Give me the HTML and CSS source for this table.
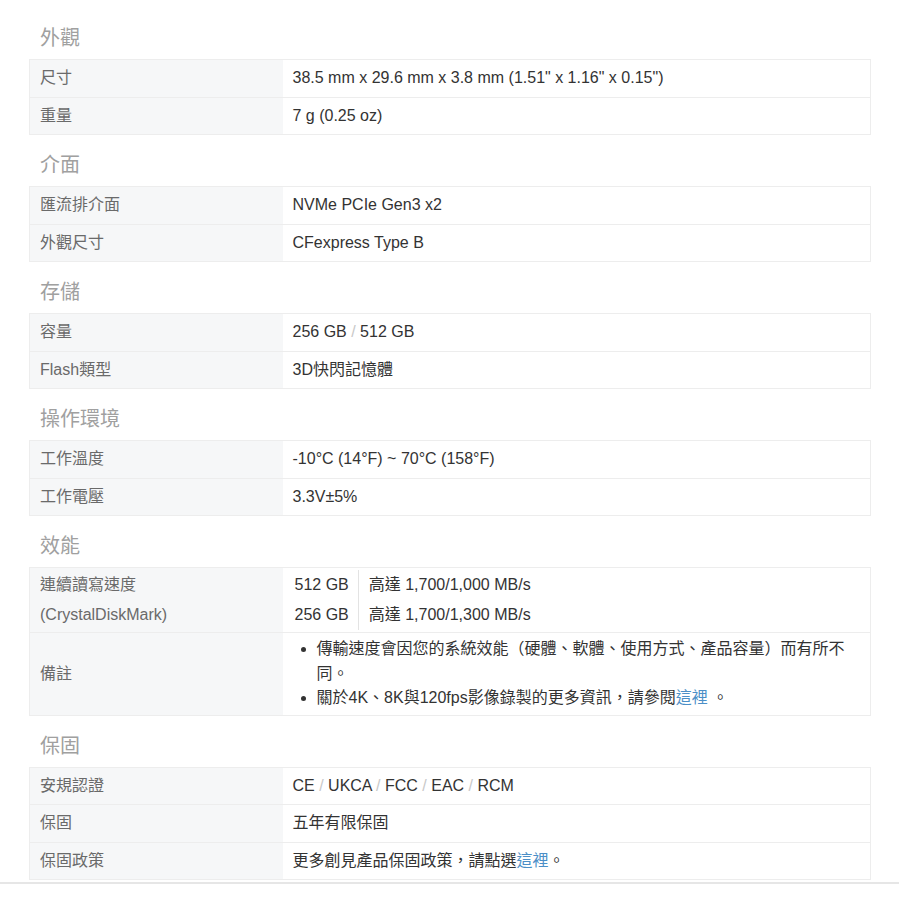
FILE: index.html
```html
<!DOCTYPE html>
<html lang="zh-Hant">
<head>
    <meta charset="UTF-8">
    <meta name="viewport" content="width=device-width, initial-scale=1.0">
    <title>規格</title>
    <link rel="stylesheet" href="styles.css">
</head>
<body>
    <div class="specs">
        <h3 class="group-title">外觀</h3>
        <table class="spec-table">
            <tr><th>尺寸</th><td>38.5 mm x 29.6 mm x 3.8 mm (1.51" x 1.16" x 0.15")</td></tr>
            <tr><th>重量</th><td>7 g (0.25 oz)</td></tr>
        </table>

        <h3 class="group-title">介面</h3>
        <table class="spec-table">
            <tr><th>匯流排介面</th><td>NVMe PCIe Gen3 x2</td></tr>
            <tr><th>外觀尺寸</th><td>CFexpress Type B</td></tr>
        </table>

        <h3 class="group-title">存儲</h3>
        <table class="spec-table">
            <tr><th>容量</th><td>256 GB <span class="sep">/</span> 512 GB</td></tr>
            <tr><th>Flash類型</th><td>3D快閃記憶體</td></tr>
        </table>

        <h3 class="group-title">操作環境</h3>
        <table class="spec-table">
            <tr><th>工作溫度</th><td>-10°C (14°F) ~ 70°C (158°F)</td></tr>
            <tr><th>工作電壓</th><td>3.3V±5%</td></tr>
        </table>

        <h3 class="group-title">效能</h3>
        <table class="spec-table">
            <tr>
                <th class="multi">連續讀寫速度<br>(CrystalDiskMark)</th>
                <td class="nested-cell">
                    <table class="speed-table">
                        <tr><td class="cap">512 GB</td><td>高達 1,700/1,000 MB/s</td></tr>
                        <tr><td class="cap">256 GB</td><td>高達 1,700/1,300 MB/s</td></tr>
                    </table>
                </td>
            </tr>
            <tr>
                <th>備註</th>
                <td class="notes-cell">
                    <ul class="notes">
                        <li>傳輸速度會因您的系統效能（硬體、軟體、使用方式、產品容量）而有所不同。</li>
                        <li>關於4K、8K與120fps影像錄製的更多資訊，請參閱<a href="#">這裡</a> 。</li>
                    </ul>
                </td>
            </tr>
        </table>

        <h3 class="group-title">保固</h3>
        <table class="spec-table">
            <tr><th>安規認證</th><td>CE <span class="sep">/</span> UKCA <span class="sep">/</span> FCC <span class="sep">/</span> EAC <span class="sep">/</span> RCM</td></tr>
            <tr><th>保固</th><td>五年有限保固</td></tr>
            <tr><th>保固政策</th><td>更多創見產品保固政策，請點選<a href="#">這裡</a>。</td></tr>
        </table>
    </div>
    <div class="page-rule"></div>
</body>
</html>
```

FILE: styles.css
```css
body {
    margin: 0;
    padding: 0;
    background: #ffffff;
    font-family: "Liberation Sans", Arial, "Noto Sans CJK TC", sans-serif;
    color: #333333;
}

.specs {
    padding: 8px 28px 0 29px;
}

.group-title {
    margin: 0;
    padding: 16px 11px 7px;
    font-size: 20px;
    line-height: 28px;
    font-weight: normal;
    color: #a0a0a0;
}

.spec-table {
    width: 100%;
    border-collapse: collapse;
    table-layout: fixed;
    border: 1px solid #ededed;
    font-size: 16px;
}

.spec-table > tbody > tr > th,
.spec-table > tbody > tr > td {
    height: 36.5px;
    padding: 0 10px;
    border-top: 1px solid #ededed;
    line-height: 20px;
    text-align: left;
    vertical-align: middle;
}

.spec-table > tbody > tr > th {
    width: 253px;
    box-sizing: border-box;
    background: #f6f7f8;
    color: #6a6a6a;
    font-weight: normal;
}

.spec-table > tbody > tr > td {
    color: #333333;
}

.spec-table th.multi {
    line-height: 30px;
}

.sep {
    color: #c8c8c8;
}

.spec-table a {
    color: #4b8fc7;
    text-decoration: none;
}

/* nested capacity / speed table */
.spec-table td.nested-cell {
    padding: 2px 10px 2px 2px;
}

.speed-table {
    border-collapse: collapse;
    font-size: 16px;
}

.speed-table td {
    padding: 0 9px 0 10px;
    line-height: 30px;
    color: #333333;
}

.speed-table td.cap {
    border-right: 1px solid #e3e3e3;
}

.spec-table td.notes-cell {
    padding: 4px 10px;
}

.notes {
    margin: 0;
    padding-left: 24px;
    line-height: 24.5px;
}

.page-rule {
    margin-top: 2px;
    height: 2px;
    background: #e6e6e6;
}
```
